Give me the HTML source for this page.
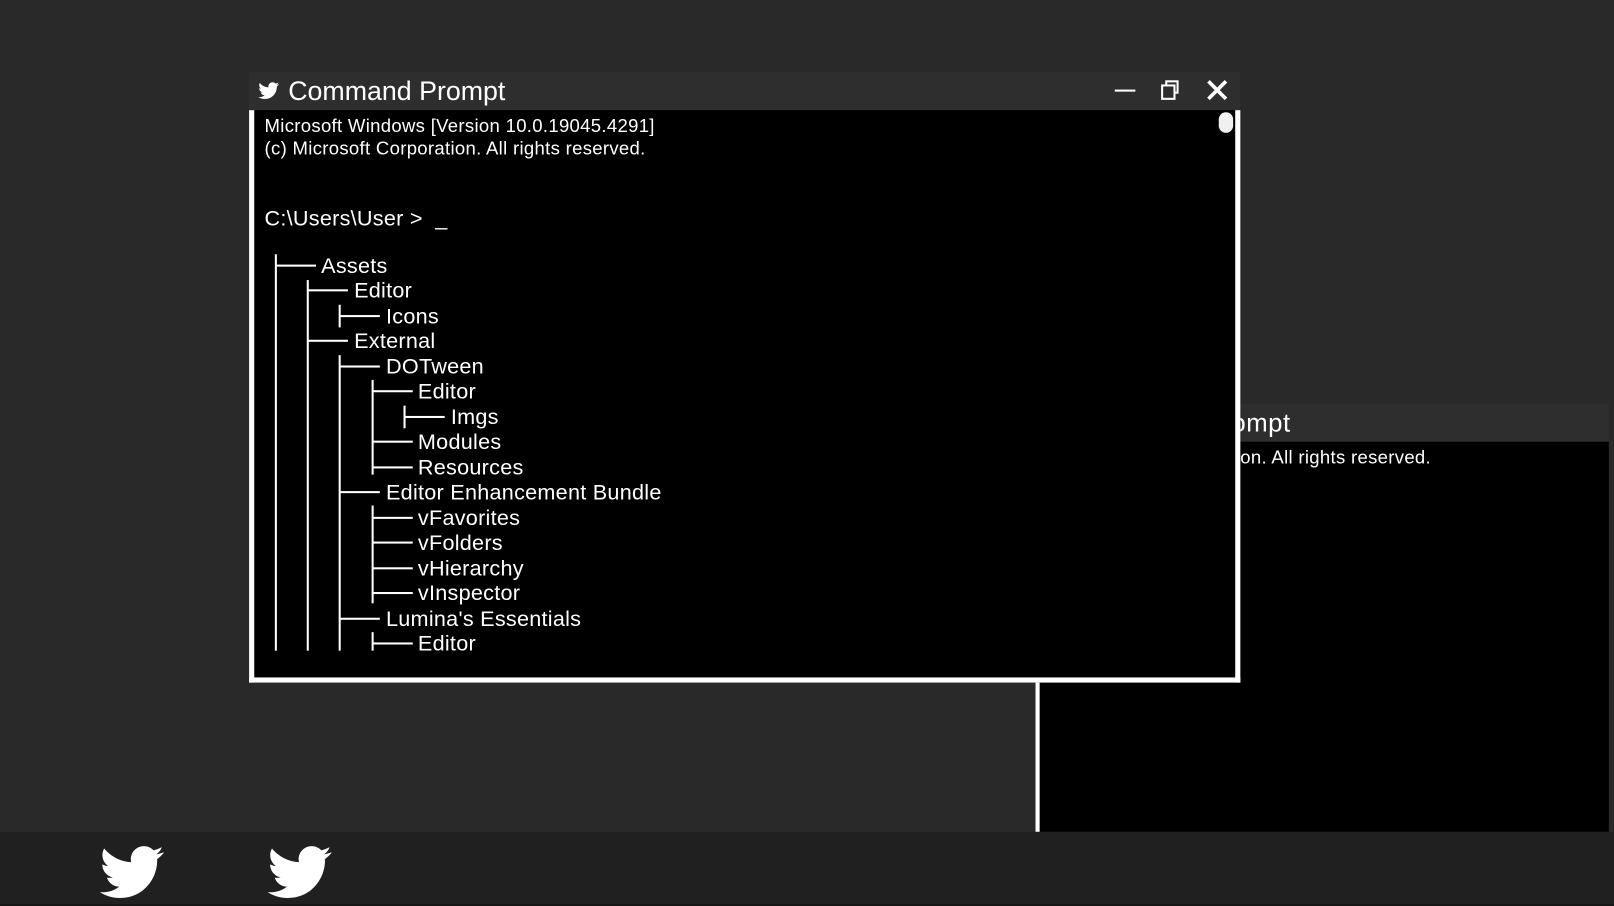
<!DOCTYPE html>
<html><head><meta charset="utf-8"><style>
html,body{margin:0;padding:0;background:#292929;overflow:hidden;width:1614px;height:906px}
#s{position:absolute;left:0;top:0;width:1568px;height:880px;transform:scale(1.02934,1.02955);transform-origin:0 0;background:#292929;font-family:"Liberation Sans",sans-serif;color:#fff}
.a{position:absolute}
.t{position:absolute;white-space:nowrap;font-size:21px;line-height:24px;letter-spacing:0.25px}
.v{position:absolute;width:2px;background:#fff}
.h{position:absolute;height:2px;background:#fff}
.sm{font-size:18px;line-height:22px;letter-spacing:0.3px}
</style></head><body><div id="s">
<!-- second window -->
<div class="a" style="left:1000px;top:392px;width:563px;height:37px;background:#2e2e2e"></div>
<div class="t" style="left:1044px;top:397px;font-size:25px;line-height:28px;letter-spacing:0.5px">Command Prompt</div>
<div class="a" style="left:1006px;top:429px;width:557px;height:379px;background:#000;border-left:4px solid #fff;box-sizing:border-box"></div>
<div class="t sm" style="left:1020px;top:433px">(c) Microsoft Corporation. All rights reserved.</div>
<!-- bottom bar -->
<div class="a" style="left:0;top:808px;width:1568px;height:70px;background:#202020"></div>
<div class="a" style="left:0;top:878px;width:1568px;height:2px;background:#161616"></div>
<svg class="a" style="left:97px;top:818px" width="62" height="58" viewBox="0 1.5 24 21"><path fill="#fff" d="M23.954 4.569c-.885.389-1.83.654-2.825.775 1.014-.611 1.794-1.574 2.163-2.723-.951.555-2.005.959-3.127 1.184-.896-.959-2.173-1.559-3.591-1.559-2.717 0-4.92 2.203-4.92 4.917 0 .39.045.765.127 1.124C7.691 8.094 4.066 6.13 1.64 3.161c-.427.722-.666 1.561-.666 2.475 0 1.71.87 3.213 2.188 4.096-.807-.026-1.566-.248-2.228-.616v.061c0 2.385 1.693 4.374 3.946 4.827-.413.111-.849.171-1.296.171-.314 0-.615-.03-.916-.086.631 1.953 2.445 3.377 4.604 3.417-1.680 1.319-3.809 2.105-6.102 2.105-.39 0-.779-.023-1.17-.067 2.189 1.394 4.768 2.209 7.557 2.209 9.054 0 13.999-7.496 13.999-13.986 0-.209 0-.42-.015-.63.961-.689 1.8-1.56 2.46-2.29z"/></svg>
<svg class="a" style="left:260px;top:818px" width="62" height="58" viewBox="0 1.5 24 21"><path fill="#fff" d="M23.954 4.569c-.885.389-1.830.654-2.825.775 1.014-.611 1.794-1.574 2.163-2.723-.951.555-2.005.959-3.127 1.184-.896-.959-2.173-1.559-3.591-1.559-2.717 0-4.92 2.203-4.92 4.917 0 .39.045.765.127 1.124C7.691 8.094 4.066 6.13 1.64 3.161c-.427.722-.666 1.561-.666 2.475 0 1.71.87 3.213 2.188 4.096-.807-.026-1.566-.248-2.228-.616v.061c0 2.385 1.693 4.374 3.946 4.827-.413.111-.849.171-1.296.171-.314 0-.615-.03-.916-.086.631 1.953 2.445 3.377 4.604 3.417-1.680 1.319-3.809 2.105-6.102 2.105-.39 0-.779-.023-1.17-.067 2.189 1.394 4.768 2.209 7.557 2.209 9.054 0 13.999-7.496 13.999-13.986 0-.209 0-.42-.015-.63.961-.689 1.8-1.56 2.46-2.290z"/></svg>
<!-- main window -->
<div class="a" style="left:242px;top:70px;width:963px;height:37px;background:#2e2e2e"></div>
<svg class="a" style="left:251px;top:79px" width="20" height="18" viewBox="0 1.5 24 21"><path fill="#fff" d="M23.954 4.569c-.885.389-1.83.654-2.825.775 1.014-.611 1.794-1.574 2.163-2.723-.951.555-2.005.959-3.127 1.184-.896-.959-2.173-1.559-3.591-1.559-2.717 0-4.920 2.203-4.92 4.917 0 .39.045.765.127 1.124C7.691 8.094 4.066 6.13 1.64 3.161c-.427.722-.666 1.561-.666 2.475 0 1.71.87 3.213 2.188 4.096-.807-.026-1.566-.248-2.228-.616v.061c0 2.385 1.693 4.374 3.946 4.827-.413.111-.849.171-1.296.171-.314 0-.615-.03-.916-.086.631 1.953 2.445 3.377 4.604 3.417-1.68 1.319-3.809 2.105-6.102 2.105-.39 0-.779-.023-1.17-.067 2.189 1.394 4.768 2.209 7.557 2.209 9.054 0 13.999-7.496 13.999-13.986 0-.209 0-.42-.015-.63.961-.689 1.8-1.56 2.46-2.29z"/></svg>
<div class="t" style="left:280px;top:73px;font-size:26px;line-height:30px;letter-spacing:0">Command Prompt</div>
<div class="a" style="left:1083px;top:87px;width:20px;height:2px;background:#fff"></div>
<div class="a" style="left:1132px;top:78px;width:13px;height:13px;border:2px solid #fff;box-sizing:border-box"></div>
<div class="a" style="left:1128px;top:82px;width:14px;height:15px;border:2px solid #fff;box-sizing:border-box;background:#2e2e2e"></div>
<svg class="a" style="left:1172px;top:77px" width="21" height="21" viewBox="0 0 21 21"><path d="M2 2L19 19M19 2L2 19" stroke="#fff" stroke-width="3.5"/></svg>
<div class="a" style="left:242px;top:107px;width:963px;height:556px;background:#000;border:5px solid #fff;border-top:0;box-sizing:border-box"></div>
<div class="a" style="left:1184px;top:109px;width:14px;height:20px;border-radius:7px;background:#f0f0f0"></div>
<div class="t sm" style="left:257px;top:111px">Microsoft Windows [Version 10.0.19045.4291]<br>(c) Microsoft Corporation. All rights reserved.</div>
<div class="t" style="left:257px;top:201px">C:\Users\User &gt;&nbsp; _</div>
<!-- tree verticals -->
<div class="v" style="left:267px;top:247px;height:385px"></div>
<div class="v" style="left:298px;top:272px;height:360px"></div>
<div class="v" style="left:329px;top:296px;height:22px"></div>
<div class="v" style="left:329px;top:345px;height:287px"></div>
<div class="v" style="left:361px;top:369px;height:92px"></div>
<div class="v" style="left:361px;top:491px;height:95px"></div>
<div class="v" style="left:361px;top:614px;height:18px"></div>
<div class="v" style="left:392px;top:394px;height:22px"></div>
<!-- horizontals -->
<div class="h" style="left:268px;top:257px;width:39px"></div>
<div class="h" style="left:299px;top:281px;width:39px"></div>
<div class="h" style="left:330px;top:306px;width:39px"></div>
<div class="h" style="left:299px;top:330px;width:39px"></div>
<div class="h" style="left:330px;top:355px;width:39px"></div>
<div class="h" style="left:362px;top:379px;width:39px"></div>
<div class="h" style="left:393px;top:404px;width:39px"></div>
<div class="h" style="left:362px;top:428px;width:39px"></div>
<div class="h" style="left:362px;top:453px;width:39px"></div>
<div class="h" style="left:330px;top:477px;width:39px"></div>
<div class="h" style="left:362px;top:502px;width:39px"></div>
<div class="h" style="left:362px;top:526px;width:39px"></div>
<div class="h" style="left:362px;top:551px;width:39px"></div>
<div class="h" style="left:362px;top:575px;width:39px"></div>
<div class="h" style="left:330px;top:600px;width:39px"></div>
<div class="h" style="left:362px;top:624px;width:39px"></div>
<!-- tree labels -->
<div class="t" style="left:312px;top:247px">Assets</div>
<div class="t" style="left:344px;top:271px">Editor</div>
<div class="t" style="left:375px;top:296px">Icons</div>
<div class="t" style="left:344px;top:320px">External</div>
<div class="t" style="left:375px;top:345px">DOTween</div>
<div class="t" style="left:406px;top:369px">Editor</div>
<div class="t" style="left:438px;top:394px">Imgs</div>
<div class="t" style="left:406px;top:418px">Modules</div>
<div class="t" style="left:406px;top:443px">Resources</div>
<div class="t" style="left:375px;top:467px">Editor Enhancement Bundle</div>
<div class="t" style="left:406px;top:492px">vFavorites</div>
<div class="t" style="left:406px;top:516px">vFolders</div>
<div class="t" style="left:406px;top:541px">vHierarchy</div>
<div class="t" style="left:406px;top:565px">vInspector</div>
<div class="t" style="left:375px;top:590px">Lumina's Essentials</div>
<div class="t" style="left:406px;top:614px">Editor</div>
</div></body></html>
